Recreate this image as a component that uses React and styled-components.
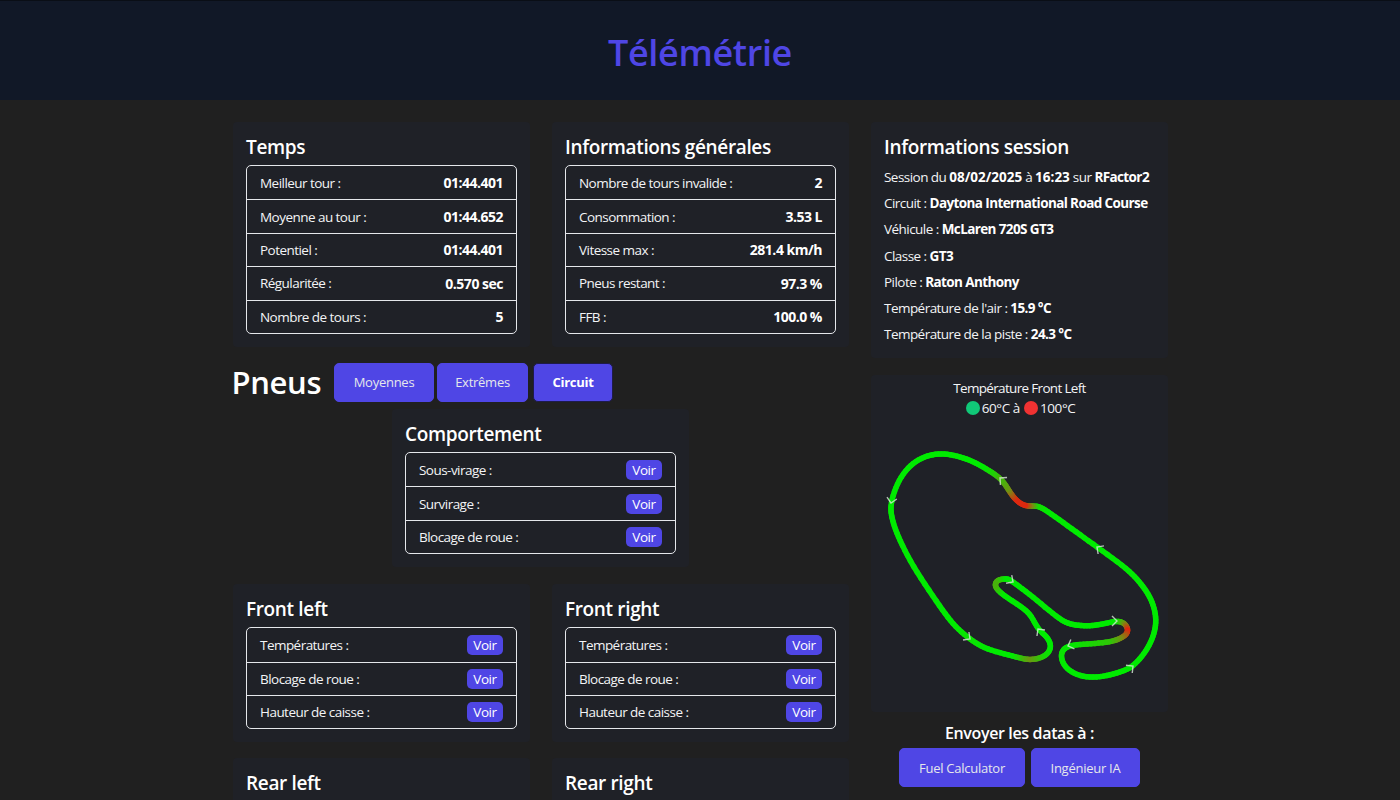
import React from "react";
import styled, { createGlobalStyle } from "styled-components";

const GlobalStyle = createGlobalStyle`
  html, body {
    margin: 0;
    padding: 0;
    background: #202020;
  }
  * {
    box-sizing: border-box;
  }
`;

// x, y, heat (0 = cold, 1 = hot), arrow
const TRACK = [
  [1000, 479, 0.25, true], [983, 468, 0], [967, 460, 0], [947, 455, 0], [930, 456, 0], [913, 464, 0], [899, 481, 0],
  [891, 504, 0, true], [892, 519, 0], [898, 537, 0], [913, 567, 0], [937, 603, 0], [953, 625, 0], [970, 640, 0.05, true],
  [987, 650, 0], [1013, 657, 0], [1030, 661, 0.45], [1045, 657, 0.1], [1051, 648, 0], [1047, 638, 0], [1038, 630, 0, true],
  [1030, 615, 0], [1017, 605, 0], [1002, 595, 0], [995, 587, 0.3], [998, 581, 0.3], [1007, 580, 0], [1013, 583, 0, true],
  [1033, 598, 0], [1057, 618, 0], [1070, 625, 0], [1087, 627, 0], [1103, 625, 0], [1117, 622, 0, true], [1125, 625, 0.5],
  [1128, 632, 1], [1123, 638, 0.6], [1110, 643, 0.2], [1087, 645, 0.1], [1068, 647, 0, true], [1061, 655, 0.05], [1065, 668, 0],
  [1080, 677, 0], [1100, 678, 0], [1120, 673, 0], [1133, 667, 0, true], [1146, 652, 0], [1154, 635, 0], [1156, 618, 0], [1151, 600, 0],
  [1141, 585, 0], [1127, 570, 0], [1097, 548, 0, true], [1072, 530, 0], [1047, 512, 0], [1037, 507, 0.1], [1025, 507, 0.95],
  [1015, 500, 0.95], [1008, 490, 0.45],
];

const heatColor = (h) => {
  const stops = [[0, 235, 0], [120, 140, 20], [232, 30, 15]];
  const t = Math.min(h, 1) * 2;
  const i = Math.min(Math.floor(t), 1);
  const f = t - i;
  const c = stops[i].map((v, k) => Math.round(v + (stops[i + 1][k] - v) * f));
  return `rgb(${c[0]},${c[1]},${c[2]})`;
};

// closed catmull-rom, sampled, lightly smoothed, then cut in short coloured pieces
function buildTrack() {
  const n = TRACK.length;
  const steps = 6;
  let samples = [];
  const arrows = [];
  for (let i = 0; i < n; i++) {
    const p0 = TRACK[(i - 1 + n) % n];
    const p1 = TRACK[i];
    const p2 = TRACK[(i + 1) % n];
    const p3 = TRACK[(i + 2) % n];
    const at = (t) => [0, 1].map((k) =>
      0.5 * (2 * p1[k] + (p2[k] - p0[k]) * t +
        (2 * p0[k] - 5 * p1[k] + 4 * p2[k] - p3[k]) * t * t +
        (3 * p1[k] - p0[k] - 3 * p2[k] + p3[k]) * t * t * t));
    for (let s = 0; s < steps; s++) {
      const [x, y] = at(s / steps);
      samples.push({ x, y, color: heatColor(p1[2] + (p2[2] - p1[2]) * (s / steps)) });
    }
    if (p1[3]) {
      arrows.push({ x: p1[0], y: p1[1], angle: (Math.atan2(p2[1] - p0[1], p2[0] - p0[0]) * 180) / Math.PI });
    }
  }
  for (let pass = 0; pass < 8; pass++) {
    samples = samples.map((s, i, all) => {
      const a = all[(i - 1 + all.length) % all.length];
      const b = all[(i + 1) % all.length];
      return { ...s, x: (a.x + 2 * s.x + b.x) / 4, y: (a.y + 2 * s.y + b.y) / 4 };
    });
  }
  const pieces = samples.map((s, i) => ({ a: s, b: samples[(i + 1) % samples.length], color: s.color }));
  return { pieces, arrows };
}

function TrackMap() {
  const { pieces, arrows } = buildTrack();
  return (
    <TrackSvg viewBox="871 425 297 275">
      {pieces.map((p, i) => (
        <line key={i} x1={p.a.x} y1={p.a.y} x2={p.b.x} y2={p.b.y} stroke={p.color} strokeWidth="5.5" strokeLinecap="round" />
      ))}
      {arrows.map((a, i) => (
        <polyline
          key={i}
          points="-5,-5 0,0 -5,5"
          transform={`translate(${a.x} ${a.y}) rotate(${a.angle})`}
          fill="none"
          stroke="#d8e8d8"
          strokeOpacity="0.8"
          strokeWidth="1.4"
        />
      ))}
    </TrackSvg>
  );
}

function InfoCard({ title, rows }) {
  return (
    <Card>
      <CardTitle>{title}</CardTitle>
      <List>
        {rows.map(([label, value]) => (
          <Row key={label}>
            <Label>{label}</Label>
            {value ? <Value>{value}</Value> : <Voir>Voir</Voir>}
          </Row>
        ))}
      </List>
    </Card>
  );
}

const wheelRows = [["Températures :"], ["Blocage de roue :"], ["Hauteur de caisse :"]];

export default function App() {
  return (
    <Page>
      <GlobalStyle />
      <Header>
        <Title>Télémétrie</Title>
      </Header>
      <Content>
        <MainColumn>
          <CardGrid>
            <InfoCard
              title="Temps"
              rows={[
                ["Meilleur tour :", "01:44.401"],
                ["Moyenne au tour :", "01:44.652"],
                ["Potentiel :", "01:44.401"],
                ["Régularitée :", "0.570 sec"],
                ["Nombre de tours :", "5"],
              ]}
            />
            <InfoCard
              title="Informations générales"
              rows={[
                ["Nombre de tours invalide :", "2"],
                ["Consommation :", "3.53 L"],
                ["Vitesse max :", "281.4 km/h"],
                ["Pneus restant :", "97.3 %"],
                ["FFB :", "100.0 %"],
              ]}
            />
          </CardGrid>
          <TyreBar>
            <TyreHeading>Pneus</TyreHeading>
            <TabButton $w={100}>Moyennes</TabButton>
            <TabButton $w={91}>Extrêmes</TabButton>
            <TabButton $w={80} $active>Circuit</TabButton>
          </TyreBar>
          <Centered>
            <InfoCard title="Comportement" rows={[["Sous-virage :"], ["Survirage :"], ["Blocage de roue :"]]} />
          </Centered>
          <CardGrid>
            <InfoCard title="Front left" rows={wheelRows} />
            <InfoCard title="Front right" rows={wheelRows} />
            <InfoCard title="Rear left" rows={wheelRows} />
            <InfoCard title="Rear right" rows={wheelRows} />
          </CardGrid>
        </MainColumn>
        <SideColumn>
          <SessionCard>
            <CardTitle>Informations session</CardTitle>
            <SessionLine>Session du <Digits>08/02/2025</Digits> à <Digits>16:23</Digits> sur <b>RFactor2</b></SessionLine>
            <SessionLine>Circuit : <b>Daytona International Road Course</b></SessionLine>
            <SessionLine>Véhicule : <b>McLaren 720S GT3</b></SessionLine>
            <SessionLine>Classe : <b>GT3</b></SessionLine>
            <SessionLine>Pilote : <b>Raton Anthony</b></SessionLine>
            <SessionLine>Température de l'air : <b>15.9 °C</b></SessionLine>
            <SessionLine>Température de la piste : <b>24.3 °C</b></SessionLine>
          </SessionCard>
          <TrackCard>
            <TrackTitle>Température Front Left</TrackTitle>
            <Legend>
              <Dot $color="#10c878" /> 60°C à <Dot $color="#f03232" /> 100°C
            </Legend>
            <TrackMap />
          </TrackCard>
          <SendTitle>Envoyer les datas à :</SendTitle>
          <SendRow>
            <TabButton $w={126}>Fuel Calculator</TabButton>
            <TabButton $w={109}>Ingénieur IA</TabButton>
          </SendRow>
        </SideColumn>
      </Content>
    </Page>
  );
}

const Page = styled.div`
  background: #202020;
  color: #fff;
  font-family: "Open Sans", "Noto Sans", sans-serif;
  font-size: 14px;
  letter-spacing: -0.025em;
`;

const Header = styled.header`
  height: 100px;
  padding-top: 3px;
  display: flex;
  align-items: center;
  justify-content: center;
  background: #111827;
  border-top: 1px solid #0a0e16;
`;

const Title = styled.h1`
  margin: 0;
  font-size: 36px;
  font-weight: 600;
  color: #4f46e5;
`;

const Content = styled.main`
  width: 935px;
  margin: 22px 0 0 233px;
  display: grid;
  grid-template-columns: 616px 297px;
  column-gap: 22px;
  align-items: start;
`;

const MainColumn = styled.div`
  display: flex;
  flex-direction: column;
`;

const SideColumn = styled.div`
  display: flex;
  flex-direction: column;
  align-items: center;
`;

const CardGrid = styled.div`
  display: grid;
  grid-template-columns: 297px 297px;
  gap: 16px 22px;
`;

const Card = styled.section`
  width: 100%;
  padding: 12px 13px 13px;
  background: #1f2127;
  border-radius: 4px;
`;

const SessionCard = styled(Card)`
  padding-bottom: 11px;
`;

const CardTitle = styled.h2`
  margin: 0 0 5px;
  height: 26px;
  font-size: 19px;
  line-height: 26px;
  font-weight: 600;
  color: #fff;
`;

const List = styled.div`
  border: 1px solid #e5e7eb;
  border-radius: 5px;
`;

const Row = styled.div`
  height: 33.4px;
  display: flex;
  align-items: center;
  justify-content: space-between;
  padding: 0 13px;
  & + & {
    border-top: 1px solid #e5e7eb;
  }
`;

const Label = styled.span`
  font-size: 13.5px;
  letter-spacing: -0.04em;
  color: #f3f4f6;
`;

const Value = styled.span`
  font-weight: 700;
  letter-spacing: -0.035em;
  color: #fff;
`;

const Voir = styled.button`
  width: 36px;
  height: 20px;
  padding: 0;
  border: 0;
  border-radius: 5px;
  background: #4f46e5;
  color: #fff;
  font: inherit;
  font-size: 13.5px;
  letter-spacing: -0.03em;
`;

const TyreBar = styled.div`
  display: flex;
  align-items: center;
  gap: 3px;
  height: 39px;
  margin: 16px 0 7px;
`;

const TyreHeading = styled.h2`
  margin: 0 9.5px 0 -1.5px;
  width: 90px;
  font-size: 31px;
  font-weight: 600;
`;

const TabButton = styled.button`
  width: ${(p) => p.$w}px;
  height: 39px;
  margin-left: ${(p) => (p.$active ? "2px" : "0")};
  padding: 0;
  border: 1px solid ${(p) => (p.$active ? "#1e1b4b" : "#4f46e5")};
  border-radius: 5px;
  background: #4f46e5;
  color: ${(p) => (p.$active ? "#fff" : "#e5e7eb")};
  font: inherit;
  font-size: 13px;
  letter-spacing: -0.02em;
  font-weight: ${(p) => (p.$active ? 700 : 400)};
`;

const Centered = styled.div`
  width: 297px;
  margin: 0 0 17px 159px;
`;

const SessionLine = styled.p`
  margin: 0;
  height: 26.2px;
  line-height: 26.2px;
  font-size: 13.5px;
  letter-spacing: -0.04em;
  white-space: nowrap;
  color: #f3f4f6;
  ${CardTitle} + & {
    margin-top: -1px;
  }
  b {
    font-weight: 700;
    letter-spacing: -0.045em;
    color: #fff;
  }
`;

const Digits = styled.strong`
  font-weight: 700;
  letter-spacing: 0;
  color: #fff;
`;

const TrackCard = styled.section`
  width: 100%;
  height: 337px;
  margin-top: 17px;
  padding-top: 4px;
  display: flex;
  flex-direction: column;
  align-items: center;
  background: #1f2127;
  border-radius: 4px;
`;

const TrackTitle = styled.div`
  line-height: 18px;
  height: 18px;
  font-size: 13.5px;
  letter-spacing: -0.05em;
  color: #f3f4f6;
`;

const Legend = styled.div`
  display: flex;
  align-items: center;
  gap: 2px;
  height: 22px;
  font-size: 13.5px;
  letter-spacing: -0.03em;
  color: #f3f4f6;
`;

const Dot = styled.span`
  width: 14px;
  height: 14px;
  margin-left: 2px;
  border-radius: 50%;
  background: ${(p) => p.$color};
`;

const TrackSvg = styled.svg`
  display: block;
  width: 297px;
  height: 275px;
  margin-top: 5px;
`;

const SendTitle = styled.div`
  margin-top: 10px;
  height: 22px;
  line-height: 22px;
  font-size: 16px;
  font-weight: 600;
`;

const SendRow = styled.div`
  display: flex;
  gap: 6px;
  margin-top: 4px;
`;
